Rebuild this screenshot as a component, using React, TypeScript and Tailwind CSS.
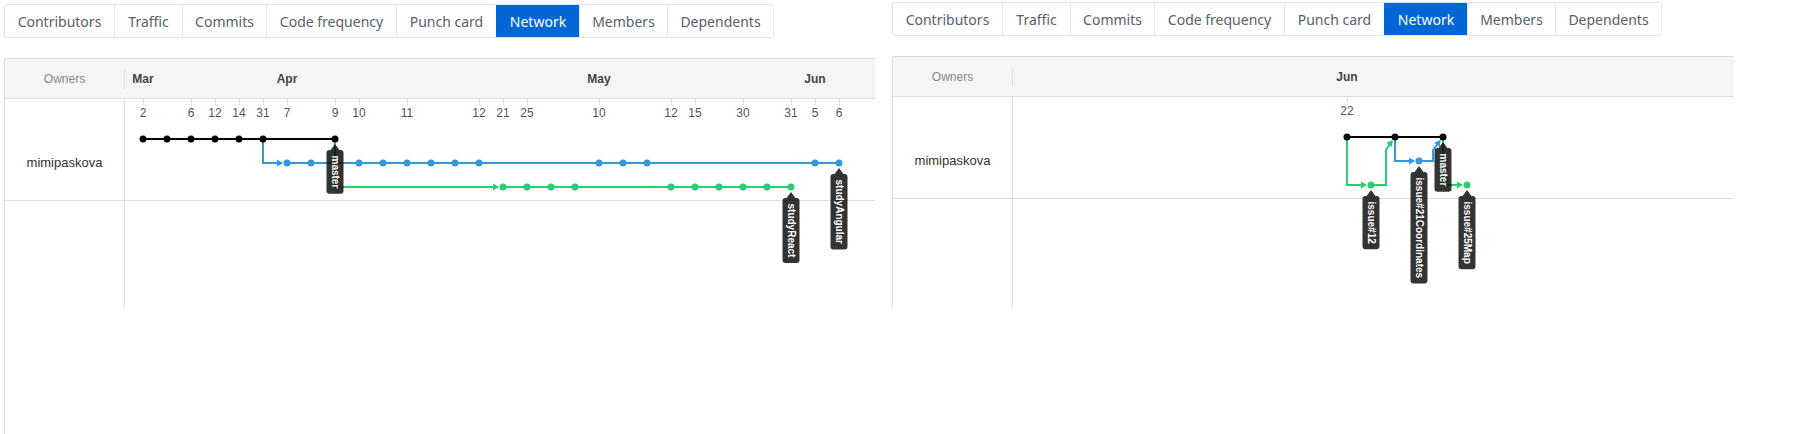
import React from "react";

const TABS: { t: string; w: string }[] = [
  { t: "Contributors", w: "w-[109px]" },
  { t: "Traffic", w: "w-[68px]" },
  { t: "Commits", w: "w-[84px]" },
  { t: "Code frequency", w: "w-[130px]" },
  { t: "Punch card", w: "w-[100px]" },
  { t: "Network", w: "w-[83px]" },
  { t: "Members", w: "w-[88px]" },
  { t: "Dependents", w: "w-[106px]" },
];

function Tabs() {
  return (
    <nav className="flex h-[34px] w-max overflow-hidden rounded-[3px] border border-[#e1e4e8] font-['Noto_Sans','Open_Sans',sans-serif] text-[14px]">
      {TABS.map((tab, i) => {
        const active = tab.t === "Network";
        return (
          <div
            key={tab.t}
            className={[
              tab.w,
              "flex items-center justify-center whitespace-nowrap",
              i > 0 ? "border-l" : "",
              active ? "border-[#0366d6] bg-[#0366d6] text-white" : "border-[#e1e4e8] text-[#586069]",
            ].join(" ")}
          >
            {tab.t}
          </div>
        );
      })}
    </nav>
  );
}

const CW: Record<string, number> = {
  i: 0.278, s: 0.556, u: 0.611, e: 0.556, "#": 0.556, M: 0.833, a: 0.556, p: 0.611, C: 0.722,
  o: 0.611, r: 0.389, d: 0.611, n: 0.611, t: 0.333, m: 0.889, y: 0.556, A: 0.722, g: 0.611,
  l: 0.278, R: 0.722, c: 0.556,
};
const textW = (t: string, size: number) =>
  t.split("").reduce((s, c) => s + (CW[c] ?? 0.556), 0) * size;

const ROWY = [80, 104, 128];
const COL = ["#000000", "#3498db", "#2ecc71"];

type Seg = { row: number; d: string; arrow?: [number, number, number, number] };

type GraphDef = {
  x0: number;
  months: [number, string][];
  dates: [number, string][];
  segs: Seg[];
  dots: [number, number][]; // [index,row]
  labels: [number, number, string][];
};

function Arrow({ a, color }: { a: [number, number, number, number]; color: string }) {
  const [x1, y1, x2, y2] = a;
  const dx = x2 - x1;
  const dy = y2 - y1;
  const len = Math.hypot(dx, dy);
  const ux = dx / len;
  const uy = dy / len;
  const L = 6;
  const W = 3.5;
  const bx = x2 - ux * L;
  const by = y2 - uy * L;
  const px = -uy;
  const py = ux;
  return (
    <polygon
      points={`${x2},${y2} ${bx + px * W},${by + py * W} ${bx - px * W},${by - py * W}`}
      fill={color}
    />
  );
}

function Label({ x, y, text }: { x: number; y: number; text: string }) {
  const h = textW(text, 10) + 11;
  const t = y + 11;
  const b = t + h;
  const l = x - 8.5;
  const rr = x + 8.5;
  const r = 3;
  const d = `M${l + r},${t} H${x - 4.5} L${x},${y + 5} L${x + 4.5},${t} H${rr - r} A${r},${r} 0 0 1 ${rr},${t + r} V${b - r} A${r},${r} 0 0 1 ${rr - r},${b} H${l + r} A${r},${r} 0 0 1 ${l},${b - r} V${t + r} A${r},${r} 0 0 1 ${l + r},${t} Z`;
  return (
    <g>
      <path d={d} fill="rgba(0,0,0,0.8)" />
      <text
        transform={`translate(${x},${t + 5.5}) rotate(90)`}
        fill="#ffffff"
        fontSize={10}
        fontWeight={700}
        dominantBaseline="central"
      >
        {text}
      </text>
    </g>
  );
}

function Graph({ g, width }: { g: GraphDef; width: number }) {
  const X = (n: number) => g.x0 + 24 * n;
  return (
    <svg className="absolute left-[120px] top-0 overflow-visible" width={width} height={375}>
      {g.months.map(([i, m]) => (
        <text key={m} x={X(i)} y={19.5} textAnchor="middle" dominantBaseline="central" fontSize={12} fontWeight={700} fill="#444444">
          {m}
        </text>
      ))}
      {g.dates.map(([i, d]) => (
        <g key={i}>
          <line x1={X(i) + 0.5} x2={X(i) + 0.5} y1={40} y2={46} stroke="#dddddd" strokeWidth={1} />
          <text x={X(i)} y={54} textAnchor="middle" dominantBaseline="central" fontSize={12} fill="#555555">
            {d}
          </text>
        </g>
      ))}
      {g.segs.map((s, k) => (
        <path key={k} d={s.d} fill="none" stroke={COL[s.row]} strokeWidth={2} />
      ))}
      {g.segs.map((s, k) => (s.arrow ? <Arrow key={k} a={s.arrow} color={COL[s.row]} /> : null))}
      {g.dots.map(([i, r], k) => (
        <circle key={k} cx={X(i)} cy={ROWY[r]} r={3.5} fill={COL[r]} />
      ))}
      {g.labels.map(([i, r, t]) => (
        <Label key={t} x={X(i)} y={ROWY[r]} text={t} />
      ))}
    </svg>
  );
}

function makeLeft(): GraphDef {
  const x0 = 18;
  const X = (n: number) => x0 + 24 * n;
  const dots: [number, number][] = [];
  [0, 1, 2, 3, 4, 5, 8].forEach((i) => dots.push([i, 0]));
  [6, 7, 9, 10, 11, 12, 13, 14, 19, 20, 21, 28, 29].forEach((i) => dots.push([i, 1]));
  [15, 16, 17, 18, 22, 23, 24, 25, 26, 27].forEach((i) => dots.push([i, 2]));
  return {
    x0,
    months: [[0, "Mar"], [6, "Apr"], [19, "May"], [28, "Jun"]],
    dates: [
      [0, "2"], [2, "6"], [3, "12"], [4, "14"], [5, "31"], [6, "7"], [8, "9"], [9, "10"], [11, "11"],
      [14, "12"], [15, "21"], [16, "25"], [19, "10"], [22, "12"], [23, "15"], [25, "30"], [27, "31"],
      [28, "5"], [29, "6"],
    ],
    segs: [
      { row: 1, d: `M${X(5)},80 V104 H${X(6) - 5}`, arrow: [X(5), 104, X(6) - 4, 104] },
      { row: 1, d: `M${X(6)},104 H${X(29)}` },
      { row: 2, d: `M${X(8)},80 V128 H${X(15) - 5}`, arrow: [X(8), 128, X(15) - 4, 128] },
      { row: 2, d: `M${X(15)},128 H${X(27)}` },
      { row: 0, d: `M${X(0)},80 H${X(8)}` },
    ],
    dots,
    labels: [[8, 0, "master"], [29, 1, "studyAngular"], [27, 2, "studyReact"]],
  };
}

function makeRight(): GraphDef {
  const x0 = 334;
  const X = (n: number) => x0 + 24 * n;
  return {
    x0,
    months: [[0, "Jun"]],
    dates: [[0, "22"]],
    segs: [
      { row: 2, d: `M${X(0)},80 V128 H${X(1) - 5}`, arrow: [X(0), 128, X(1) - 4, 128] },
      { row: 2, d: `M${X(1)},128 H${X(1) + 15} V93 L${X(2) - 3},84`, arrow: [X(1) + 15, 93, X(2) - 2.5, 83] },
      { row: 1, d: `M${X(2)},80 V104 H${X(3) - 5}`, arrow: [X(2), 104, X(3) - 4, 104] },
      { row: 1, d: `M${X(3)},104 H${X(3) + 14} V93 L${X(4) - 3},84`, arrow: [X(3) + 14, 93, X(4) - 2.5, 83] },
      { row: 2, d: `M${X(4)},80 V128 H${X(5) - 5}`, arrow: [X(4), 128, X(5) - 4, 128] },
      { row: 0, d: `M${X(0)},80 H${X(4)}` },
    ],
    dots: [[0, 0], [2, 0], [4, 0], [1, 2], [3, 1], [5, 2]],
    labels: [[1, 2, "issue#12"], [3, 1, "issue#21Coordinates"], [4, 0, "master"], [5, 2, "issue#25Map"]],
  };
}

function Panel({ g, size, row2, gw }: { g: GraphDef; size: string; row2: string; gw: number }) {
  return (
    <div className={`relative overflow-hidden rounded-tl-[3px] border-l border-t border-[#dddddd] font-['Liberation_Sans',Arial,sans-serif] ${size}`}>
      <div className="flex h-[40px] items-center border-b border-[#dddddd] bg-[#f5f5f5]">
        <div className="flex h-[20px] w-[120px] items-center justify-center border-r border-[#dddddd] text-[12px] text-[#888888]">
          Owners
        </div>
      </div>
      <div className="flex h-[102px] border-b border-[#dddddd]">
        <div className="w-[120px] border-r border-[#dddddd] pt-[57px] text-center text-[13px] leading-[14px] text-[#333333]">
          mimipaskova
        </div>
      </div>
      <div className={`flex ${row2}`}>
        <div className="w-[120px] border-r border-[#dddddd]" />
      </div>
      <Graph g={g} width={gw} />
    </div>
  );
}

export default function App() {
  return (
    <div className="flex h-[434px] w-[1804px] overflow-hidden bg-white">
      <div className="flex w-[876px] shrink-0 flex-col overflow-hidden pl-[4px] pt-[4px]">
        <Tabs />
        <div className="mt-[20px]">
          <Panel g={makeLeft()} size="w-[871px] h-[376px]" row2="h-[106px]" gw={750} />
        </div>
      </div>
      <div className="flex flex-col pl-[16px] pt-[2px]">
        <Tabs />
        <div className="mt-[20px]">
          <Panel g={makeRight()} size="w-[842px] h-[251px]" row2="h-[108px]" gw={721} />
        </div>
      </div>
    </div>
  );
}
